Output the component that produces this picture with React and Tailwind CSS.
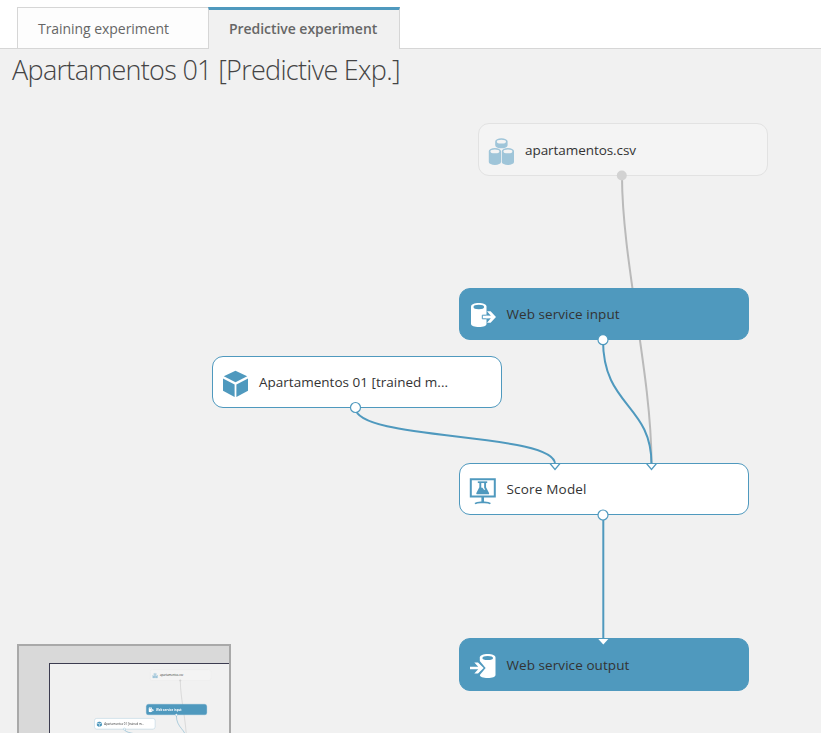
import React from "react";

const BLUE = "#4f99be";

function DatasetIcon() {
  const can = (x, y, h, w) => (
    <g key={`${x}-${y}`}>
      <path d={`M${x} ${y + 3}v${h - 6}a${w / 2} 3 0 0 0 ${w} 0v-${h - 6}a${w / 2} 3 0 0 0 -${w} 0z`} fill="#9fc5d9" />
      <ellipse cx={x + w / 2} cy={y + 3.4} rx={w / 2 - 1.6} ry="1.9" fill="#f4f4f4" />
    </g>
  );
  return (
    <svg className="h-7 w-7" viewBox="0 0 28 28">
      {can(7.2, 0.3, 10, 12.4)}
      {can(0.8, 10, 17, 12.2)}
      {can(13.8, 10, 17, 12.2)}
    </svg>
  );
}

function InputIcon() {
  return (
    <svg className="h-7 w-7" viewBox="0 0 28 28">
      <path d="M2 4.5v17.500c0 1.700 3.600 3 8 3s7.500-1.300 7.500-3v-17.500c0-2-3.500-3.500-7.750-3.500S2 2.500 2 4.500z" fill="#fff" />
      <ellipse cx="9.800" cy="5" rx="5.300" ry="2.200" fill={BLUE} />
      <path d="M13.300 13.200h7v3.600h-7z" fill="#fff" stroke={BLUE} strokeWidth="1" />
      <path d="M18 9.300h3.600l5.400 5.700-5.400 5.700h-3.600l3.800-4.400h-5v-2.600h5z" fill="#fff" />
    </svg>
  );
}

function OutputIcon() {
  return (
    <svg className="h-7 w-7" viewBox="0 0 28 28">
      <path d="M10.800 4.500v17.500c0 1.700 3.300 3 7.900 3s7.800-1.300 7.800-3v-17.500c0-2-3.400-3.500-7.800-3.500S10.800 2.500 10.800 4.500z" fill="#fff" />
      <ellipse cx="18.700" cy="5" rx="5.300" ry="2.100" fill={BLUE} />
      <path d="M8.600 7.800h2l6 7.200-6 7.200h-2z" fill={BLUE} />
      <path d="M1 13.800h8.200L5.300 9.400h3.700l5.700 5.600-5.700 5.600H5.300l3.900-4.400H1z" fill="#fff" />
    </svg>
  );
}

function CubeIcon() {
  return (
    <svg className="h-7 w-7" viewBox="0 0 28 28" fill={BLUE}>
      <path d="M13.500 0.800L25.200 6.200L13.500 12.300L1.800 6.200z" />
      <path d="M1 8.400L12.600 14.400V27L1 20.800z" />
      <path d="M14.400 14.400L26 8.400V20.800L14.400 27z" />
    </svg>
  );
}

function ScoreIcon() {
  return (
    <svg className="h-7 w-7" viewBox="0 0 28 28" fill="none" stroke={BLUE}>
      <path d="M1.800 2.300h24v17.200h-24z" strokeWidth="2" />
      <path d="M13.700 20v5.500" strokeWidth="2.600" />
      <path d="M6 26.600c2-1.600 4-1.300 7.700-1.300s5.700-.3 7.700 1.300" strokeWidth="1.700" />
      <path d="M8.800 5.200h9.400" strokeWidth="1.700" />
      <path d="M11.300 5.500v5L8.200 16.400h11L16.100 10.500v-5" strokeWidth="1.900" strokeLinejoin="round" />
      <path d="M11.300 10.500l2.200.2 1.500 2h2.200l2 4H8.500z" fill={BLUE} stroke="none" />
    </svg>
  );
}

const NODES = [
  { label: "apartamentos.csv", Icon: DatasetIcon, place: "left-[477.500px] top-[74px]", look: "border-[#e2e2e2] bg-[#f4f4f4]", text: "pt-[2px] tracking-[-0.060px]" },
  { label: "Web service input", Icon: InputIcon, place: "left-[459px] top-[238.500px]", look: "border-[#4f99be] bg-[#4f99be]", text: "tracking-[0.060px]" },
  { label: "Apartamentos 01 [trained m...", Icon: CubeIcon, place: "left-[211.500px] top-[306.500px]", look: "border-[#4f99be] bg-white", text: "tracking-[0.010px]" },
  { label: "Score Model", Icon: ScoreIcon, place: "left-[459px] top-[413.500px]", look: "border-[#4f99be] bg-white", text: "tracking-[0.190px]" },
  { label: "Web service output", Icon: OutputIcon, place: "left-[459px] top-[589px]", look: "border-[#4f99be] bg-[#4f99be]", text: "pt-[2px] tracking-[0.070px]" },
];

function Diagram({ mini }) {
  const nodes = mini ? NODES.slice(0, 3) : NODES;
  return (
    <>
      <svg className="absolute left-0 top-0 h-[684px] w-[821px]" viewBox="0 49 821 684" fill="none">
        <path d="M622 176C622 260 651.500 375 651.500 463" stroke="#bababa" strokeWidth="2" />
      </svg>
      {nodes.map(({ label, Icon, place, look, text }) => (
        <div key={label} className={`absolute flex h-[52.500px] w-[290px] items-center rounded-[11px] border pl-[9px] ${place} ${look}`}>
          <div className="pt-[5px]">
            <Icon />
          </div>
          <span className={`ml-[9.500px] whitespace-nowrap text-[13.500px] ${text} ${mini && look.includes("bg-[#4f99be]") ? "font-bold text-white" : "text-[#333]"}`}>
            {label}
          </span>
        </div>
      ))}
      <svg className="absolute left-0 top-0 h-[684px] w-[821px]" viewBox="0 49 821 684" fill="none" stroke={BLUE}>
        <g strokeWidth="2">
          <path d="M603 340C603 407 651.500 404 651.500 464" />
          <path d="M355.500 408C355.500 441 555 432 555 464" />
          <path d="M603.300 515V639" />
        </g>
        <g fill="#fff" strokeWidth="1.200">
          <path d="M550 463.500h10l-5 6z" />
          <path d="M646.500 463.500h10l-5 6z" />
          <path d="M598.300 639h10l-5 5.500z" stroke="none" />
          <circle cx="603" cy="339.700" r="5" />
          <circle cx="355.500" cy="407.500" r="5" />
          <circle cx="603" cy="515" r="5" />
        </g>
        <circle cx="621.800" cy="175.500" r="5" fill="#d2d2d2" stroke="none" />
      </svg>
    </>
  );
}

export default function App() {
  return (
    <div className="flex h-[733px] w-[821px] flex-col overflow-hidden bg-[#f1f1f1] font-['Open_Sans','Noto_Sans',sans-serif]">
      <nav className="flex h-[49px] shrink-0 items-end border-b border-[#d6d6d6] bg-white pl-[17px] text-[14px] text-[#666]">
        <div className="flex h-[41px] w-[191px] items-center border-l border-t border-[#d6d6d6] bg-[#fdfdfd] pl-5 pt-px">
          <span className="whitespace-nowrap tracking-[-0.050px]">Training experiment</span>
        </div>
        <div className="-mb-px flex h-[42px] w-[192px] items-center border-x border-t-[3px] border-x-[#d6d6d6] border-t-[#4f99be] bg-[#f1f1f1] pl-5 pb-[3px]">
          <span className="whitespace-nowrap font-semibold tracking-[-0.050px]">Predictive experiment</span>
        </div>
      </nav>
      <main className="relative flex-1 overflow-hidden">
        <h1 className="whitespace-nowrap pl-3 pt-px text-[27px] font-light leading-[40px] tracking-[-0.700px] text-[#444]">
          Apartamentos 01 [Predictive Exp.]
        </h1>
        <Diagram />
        <div className="absolute left-[17px] top-[595px] h-[120px] w-[214px] overflow-hidden border-2 border-[#a9a9a9] bg-[#d9d9d9]">
          <div className="ml-[30px] mt-[17px] h-[110px] border-l border-t border-[#3c3c50] bg-[#f1f1f1]" />
          <div className="absolute left-[30.900px] top-[7.900px] h-[684px] w-[821px] origin-top-left scale-[0.2095]">
            <Diagram mini />
          </div>
        </div>
      </main>
    </div>
  );
}
